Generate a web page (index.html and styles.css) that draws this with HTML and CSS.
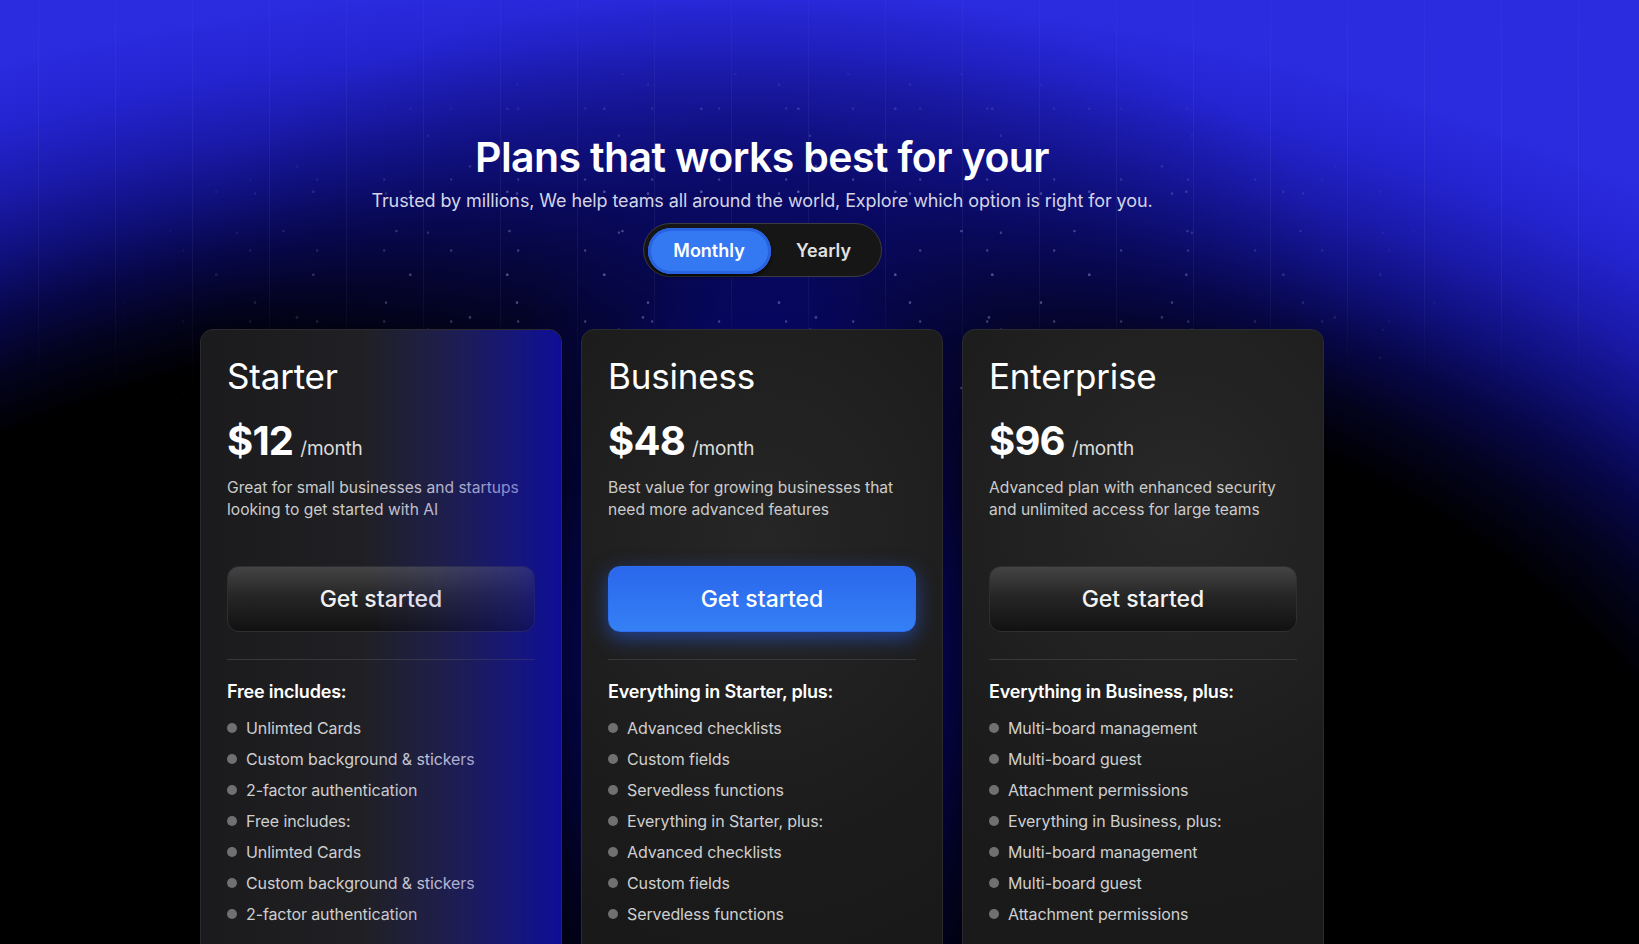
FILE: index.html
```html
<!DOCTYPE html>
<html lang="en">
<head>
<meta charset="utf-8">
<title>Pricing</title>
<link rel="stylesheet" href="styles.css">
</head>
<body>
<div class="page">
  <div class="bg-glow"></div>
  <div class="bg-grid"></div>
  <div class="bg-stars"></div>

  <main class="content">
    <header class="hero">
      <h1 class="hero-title">Plans that works best for your</h1>
      <p class="hero-sub">Trusted by millions, We help teams all around the world, Explore which option is right for you.</p>
      <div class="toggle">
        <button class="toggle-opt is-active">Monthly</button>
        <button class="toggle-opt">Yearly</button>
      </div>
    </header>

    <section class="plans">
      <article class="plan plan-starter">
        <h2 class="plan-name">Starter</h2>
        <div class="plan-price"><span class="amount">$12</span><span class="period">/month</span></div>
        <p class="plan-desc">Great for small businesses and startups looking to get started with AI</p>
        <button class="plan-btn">Get started</button>
        <hr class="plan-divider">
        <h3 class="plan-includes">Free includes:</h3>
        <ul class="plan-list">
          <li>Unlimted Cards</li>
          <li>Custom background &amp; stickers</li>
          <li>2-factor authentication</li>
          <li>Free includes:</li>
          <li>Unlimted Cards</li>
          <li>Custom background &amp; stickers</li>
          <li>2-factor authentication</li>
        </ul>
      </article>

      <article class="plan plan-business">
        <h2 class="plan-name">Business</h2>
        <div class="plan-price"><span class="amount">$48</span><span class="period">/month</span></div>
        <p class="plan-desc">Best value for growing businesses that need more advanced features</p>
        <button class="plan-btn plan-btn-primary">Get started</button>
        <hr class="plan-divider">
        <h3 class="plan-includes">Everything in Starter, plus:</h3>
        <ul class="plan-list">
          <li>Advanced checklists</li>
          <li>Custom fields</li>
          <li>Servedless functions</li>
          <li>Everything in Starter, plus:</li>
          <li>Advanced checklists</li>
          <li>Custom fields</li>
          <li>Servedless functions</li>
        </ul>
      </article>

      <article class="plan plan-enterprise">
        <h2 class="plan-name">Enterprise</h2>
        <div class="plan-price"><span class="amount">$96</span><span class="period">/month</span></div>
        <p class="plan-desc">Advanced plan with enhanced security and unlimited access for large teams</p>
        <button class="plan-btn">Get started</button>
        <hr class="plan-divider">
        <h3 class="plan-includes">Everything in Business, plus:</h3>
        <ul class="plan-list">
          <li>Multi-board management</li>
          <li>Multi-board guest</li>
          <li>Attachment permissions</li>
          <li>Everything in Business, plus:</li>
          <li>Multi-board management</li>
          <li>Multi-board guest</li>
          <li>Attachment permissions</li>
        </ul>
      </article>
    </section>
  </main>
</div>
</body>
</html>
```
FILE: styles.css
```css
* { box-sizing: border-box; }

html, body {
  margin: 0;
  padding: 0;
  background: #000;
}

body {
  font-family: Inter, "Liberation Sans", sans-serif;
  color: #fff;
}

.page {
  position: relative;
  width: 1639px;
  height: 944px;
  overflow: hidden;
  background:
    radial-gradient(ellipse 1432px 878px at 642px 1000px,
      #000 0%, #000 78%, #03031e 84%, #07074a 90%, #10107e 96%, #1a1aaa 102%, #2424d0 109%, #2b2be0 116%);
}

.bg-glow {
  position: absolute;
  inset: 0;
  background:
    radial-gradient(ellipse 300px 560px at 762px 650px,
      rgba(10, 10, 160, 0.95) 0%, rgba(8, 8, 140, 0.75) 45%, rgba(6, 6, 100, 0.3) 75%, rgba(0, 0, 0, 0) 100%),
    radial-gradient(ellipse 560px 260px at 762px 250px,
      rgba(12, 12, 120, 0.6) 0%, rgba(10, 10, 100, 0.3) 60%, rgba(0, 0, 0, 0) 100%);
  pointer-events: none;
}

.bg-grid {
  position: absolute;
  inset: 0;
  background-image: linear-gradient(to right, rgba(255, 255, 255, 0.05) 0 1px, transparent 1px);
  background-size: 77px 100%;
  background-position: 38px 0;
  -webkit-mask-image: linear-gradient(to bottom, rgba(0,0,0,0.5) 0%, #000 15%, #000 30%, transparent 42%);
  mask-image: linear-gradient(to bottom, rgba(0,0,0,0.5) 0%, #000 15%, #000 30%, transparent 42%);
  pointer-events: none;
}

.bg-stars {
  position: absolute;
  inset: 0;
  background-image:
    radial-gradient(circle at 23% 31%, rgba(190, 190, 255, 0.4) 0 1px, transparent 1.7px),
    radial-gradient(circle at 71% 62%, rgba(190, 190, 255, 0.35) 0 1px, transparent 1.7px),
    radial-gradient(circle at 41% 83%, rgba(190, 190, 255, 0.3) 0 1.1px, transparent 1.8px),
    radial-gradient(circle at 57% 12%, rgba(190, 190, 255, 0.3) 0 0.9px, transparent 1.6px),
    radial-gradient(circle at 88% 44%, rgba(190, 190, 255, 0.3) 0 1px, transparent 1.7px),
    radial-gradient(circle at 12% 77%, rgba(190, 190, 255, 0.3) 0 0.9px, transparent 1.6px);
  background-size: 97px 83px, 131px 109px, 173px 151px, 67px 71px, 113px 157px, 191px 97px;
  background-position: 0 0, 31px 17px, 53px 41px, 11px 29px, 71px 5px, 23px 61px;
  -webkit-mask-image: radial-gradient(ellipse 700px 250px at 790px 290px, #000 40%, transparent 100%);
  mask-image: radial-gradient(ellipse 700px 250px at 790px 290px, #000 40%, transparent 100%);
  pointer-events: none;
}

.content {
  position: relative;
  width: 1124px;
  margin-left: 200px;
}

/* Hero */
.hero {
  display: flex;
  flex-direction: column;
  align-items: center;
  padding-top: 133px;
}

.hero-title {
  margin: 0;
  font-size: 41px;
  line-height: 48px;
  font-weight: 600;
  letter-spacing: -0.6px;
  color: #fff;
}

.hero-sub {
  margin: 8px 0 0;
  font-size: 18px;
  line-height: 24px;
  font-weight: 400;
  color: #d4d4e6;
  letter-spacing: -0.1px;
}

.toggle {
  margin-top: 10px;
  display: flex;
  align-items: center;
  width: 239px;
  height: 54px;
  padding: 4px 4px 3px 4px;
  border-radius: 27px;
  background: #161616;
  border: 1px solid #3b3b44;
}

.toggle-opt {
  font-family: inherit;
  font-size: 18px;
  font-weight: 600;
  border: 0;
  background: transparent;
  color: #e2e2e2;
  height: 46px;
  flex: 1;
  border-radius: 23px;
  padding: 0;
  cursor: pointer;
}

.toggle-opt.is-active {
  flex: 0 0 123px;
  color: #fff;
  background: #3479f1;
  box-shadow: inset 0 0 0 3px #2a63e2, 0 3px 3px rgba(0, 0, 0, 0.6);
}

/* Plans */
.plans {
  margin-top: 52px;
  display: grid;
  grid-template-columns: repeat(3, 362px);
  gap: 19px;
}

.plan {
  position: relative;
  height: 700px;
  padding: 26px 26px 0 26px;
  border-radius: 13px;
  border: 1px solid #2b2b2f;
  background: #1c1c1c;
  overflow: hidden;
}

.plan-starter {
  background: linear-gradient(90deg, #1b1b1d 0%, #202024 45%, #1c1c3a 75%, #12125e 100%);
}

.plan-starter::after {
  content: "";
  position: absolute;
  inset: 0;
  background: linear-gradient(90deg, rgba(0, 0, 0, 0) 45%, rgba(40, 40, 220, 0.12) 65%, rgba(20, 20, 200, 0.38) 88%, rgba(12, 12, 180, 0.65) 100%);
  pointer-events: none;
}

.plan-business {
  background: radial-gradient(ellipse 360px 420px at 50% 30%, #262626 0%, #1c1c1c 70%, #191919 100%);
}

.plan-enterprise {
  background: radial-gradient(ellipse 360px 400px at 60% 25%, #282828 0%, #1d1d1d 70%, #1a1a1a 100%);
}

.plan-name {
  margin: 0;
  font-size: 35px;
  line-height: 40px;
  font-weight: 400;
  letter-spacing: -0.2px;
  color: #fff;
}

.plan-price {
  margin-top: 21px;
  display: flex;
  align-items: baseline;
  gap: 7px;
  height: 48px;
}

.plan-price .amount {
  font-size: 40px;
  line-height: 48px;
  font-weight: 700;
  letter-spacing: -0.8px;
}

.plan-price .period {
  font-size: 19px;
  color: #dcdcdc;
  letter-spacing: -0.2px;
}

.plan-desc {
  margin: 12px 0 0;
  height: 44px;
  font-size: 15.6px;
  line-height: 22px;
  color: #cbcbcb;
  letter-spacing: 0;
}

.plan-btn {
  display: block;
  width: 100%;
  height: 66px;
  margin-top: 45px;
  font-family: inherit;
  font-size: 23px;
  font-weight: 500;
  color: #f2f2f2;
  border-radius: 12px;
  border: 1px solid #2f2f33;
  background: linear-gradient(180deg, #444 0%, #262626 45%, #111 100%);
  cursor: pointer;
}

.plan-btn-primary {
  color: #fff;
  border: 1px solid #2d6ff0;
  background: linear-gradient(180deg, #2a67ec 0%, #3580f5 100%);
  box-shadow: 0 6px 20px rgba(40, 100, 255, 0.5);
}

.plan-divider {
  margin: 27px 0 0;
  border: 0;
  height: 1px;
  background: #39393d;
}

.plan-includes {
  margin: 20px 0 0;
  font-size: 18px;
  line-height: 24px;
  font-weight: 600;
  color: #fff;
  letter-spacing: -0.2px;
}

.plan-list {
  list-style: none;
  margin: 14px 0 0;
  padding: 0;
  display: flex;
  flex-direction: column;
  gap: 11px;
}

.plan-list li {
  display: flex;
  align-items: center;
  gap: 9px;
  font-size: 16px;
  line-height: 20px;
  color: #cfcfcf;
  letter-spacing: -0.1px;
}

.plan-list li::before {
  content: "";
  flex: 0 0 10px;
  width: 10px;
  height: 10px;
  border-radius: 50%;
  background: #707070;
}
```
